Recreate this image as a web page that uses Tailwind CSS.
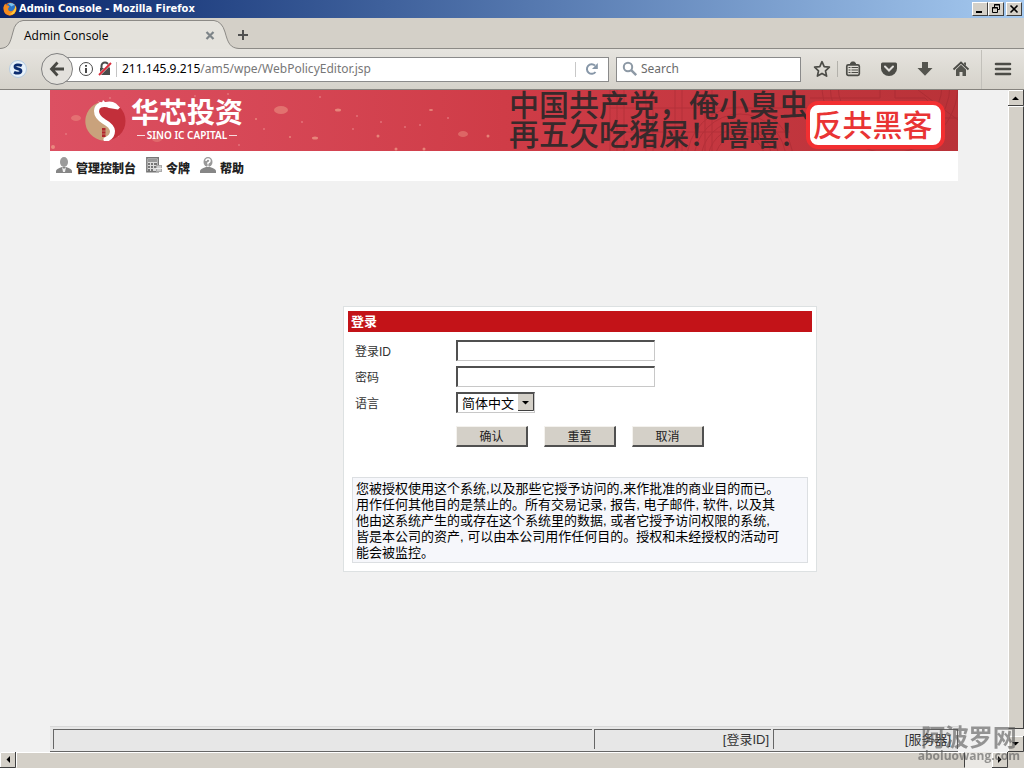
<!DOCTYPE html>
<html lang="zh-CN">
<head>
<meta charset="utf-8">
<title>Admin Console</title>
<script src="https://cdn.jsdelivr.net/npm/@tailwindcss/browser@4"></script>
</head>
<body class="h-screen flex flex-col overflow-hidden bg-[#d4d0c8] text-black font-['Noto_Sans','Noto_Sans_CJK_SC',sans-serif] text-xs">

<!-- Window title bar -->
<header class="h-[18px] shrink-0 flex items-center gap-[2px] pl-[3px] pr-[2px] bg-linear-to-r from-[#0a246a] to-[#a6caf0]">
  <svg class="size-[14px]" viewBox="0 0 14 14" aria-hidden="true">
    <circle cx="7" cy="7" r="6.5" fill="#e66000"/>
    <circle cx="7.6" cy="6" r="4.8" fill="#2b74c7"/>
    <path d="M5 1.5Q9 0 12 3Q9.500 3 8.500 4.500Z" fill="#7cc5f0"/>
    <path d="M.6 5Q1 2.500 2.500 1.500L3 3.200Q5 3 6.500 4.500L5.400 6Q4.500 8 6.500 9Q9 10 12 6.500Q13 9 11 11.500Q7 15 2.800 12Q.2 9.500 .6 5Z" fill="#f58a1f"/>
    <path d="M12.500 3.500Q14.500 8 11 11.700Q8 13 6 12.300Q11 11 12.500 3.500Z" fill="#fcc93a"/>
  </svg>
  <h1 class="flex-1 text-[11px] leading-4 font-bold text-white font-['DejaVu_Sans_Condensed','Noto_Sans',sans-serif]">Admin Console - Mozilla Firefox</h1>
  <div class="flex">
    <button aria-label="Minimize" class="w-4 h-[14px] bg-[#d4d0c8] border border-t-white border-l-white border-r-[#404040] border-b-[#404040]"><svg class="w-[14px] h-3" viewBox="0 0 14 12"><path d="M3 8h6v2H3z"/></svg></button>
    <button aria-label="Restore" class="w-4 h-[14px] bg-[#d4d0c8] border border-t-white border-l-white border-r-[#404040] border-b-[#404040]"><svg class="w-[14px] h-3" viewBox="0 0 14 12" fill="none" stroke="#000"><path d="M5.500 4V1.500h5v5H9M5 2h6M3.500 4.500h5v5h-5zM3 5h6"/></svg></button>
    <button aria-label="Close" class="ml-[2px] w-4 h-[14px] bg-[#d4d0c8] border border-t-white border-l-white border-r-[#404040] border-b-[#404040]"><svg class="w-[14px] h-3" viewBox="0 0 14 12" fill="none" stroke="#000" stroke-width="1.600"><path d="M3.500 2.500l7 7M10.500 2.500l-7 7"/></svg></button>
  </div>
</header>

<!-- Tab strip -->
<div class="h-[31px] shrink-0 flex items-center relative bg-[#d4d0c8]">
  <svg class="absolute inset-0 w-full h-[31px]" aria-hidden="true">
    <path d="M0 30.500H2000" stroke="#8c8a86" fill="none"/>
    <path d="M0 30.500C9 30 10 25 13 14Q15 3.500 23 2.500H214Q222 3.500 225 14C228 25 230 30 239 30.500V31H0Z" fill="#e4e2dc"/>
    <path d="M0 30.500C9 30 10 25 13 14Q15 3.500 23 2.500H214Q222 3.500 225 14C228 25 230 30 239 30.500" stroke="#8c8a86" fill="none"/>
  </svg>
  <div class="relative w-[225px] pl-6 pr-2 pt-1 flex items-center justify-between">
    <span class="text-xs leading-4 font-['Open_Sans',sans-serif]">Admin Console</span>
    <button aria-label="Close tab"><svg class="size-4" viewBox="0 0 16 16" stroke="#7d8488" stroke-width="2.200"><path d="M5.500 4l7 7M12.500 4l-7 7"/></svg></button>
  </div>
  <button aria-label="New tab" class="relative ml-[10px] pt-[3px]"><svg class="size-4" viewBox="0 0 16 16" stroke="#505050" stroke-width="2"><path d="M8 3v10M3 8h10"/></svg></button>
</div>

<!-- Navigation toolbar -->
<nav class="h-[41px] shrink-0 flex items-center pl-[9px] pr-3 bg-linear-to-b from-[#e6e4df] to-[#d5d2ca] border-b border-[#85837e]">
  <button aria-label="S" class="size-[18px] shrink-0"><svg class="size-[18px]" viewBox="0 0 18 18"><circle cx="9" cy="9" r="8.500" fill="#e8f2fa" stroke="#b5cbe0"/><path d="M12.800 5.800Q10.500 4.500 8 4.900Q5.800 5.300 6 7Q6.200 8.300 9 8.900Q12 9.500 12 11.200Q11.800 13 9.200 13.200Q7 13.300 5 12.200" fill="none" stroke="#0c2d70" stroke-width="2.800"/></svg></button>
  <button aria-label="Back" class="relative z-10 ml-[14px] size-8 shrink-0 rounded-full bg-[#e3e1dc] border border-[#808080] flex items-center justify-center"><svg class="size-5" viewBox="0 0 20 20" fill="none" stroke="#494944" stroke-width="2.800"><path d="M10.500 3.500L4.500 10l6 6.500M4.500 10H17"/></svg></button>
  <div class="-ml-[9px] flex-1 min-w-0 h-[25px] flex items-center bg-white border border-[#8a8a8a] pl-[13px]">
    <svg class="size-4 shrink-0" viewBox="0 0 16 16" fill="none" stroke="#494949"><circle cx="8" cy="8" r="6.500"/><path d="M8 7v5M8 4v1.800" stroke-width="2"/></svg>
    <svg class="size-4 shrink-0 ml-[3px]" viewBox="0 0 16 16"><path d="M4.500 8V5a3.500 3.500 0 017 0v3" fill="none" stroke="#4a4a4a" stroke-width="2"/><path d="M3 7h10v7H3z" fill="#4a4a4a"/><path d="M2 14L14 2" stroke="#fff" stroke-width="2.600"/><path d="M2 14L14 2" stroke="#d92b3a" stroke-width="2"/></svg>
    <span class="ml-[3px] mr-[5px] w-px h-[15px] bg-[#c4c4c4]"></span>
    <label for="url" class="text-xs leading-4">211.145.9.215</label>
    <input id="url" value="/am5/wpe/WebPolicyEditor.jsp" class="flex-1 min-w-0 text-xs leading-4 text-[#777] bg-transparent outline-none">
    <span class="w-px h-[15px] bg-[#c8c8c8]"></span>
    <button aria-label="Reload" class="w-8 flex justify-center"><svg class="size-4" viewBox="0 0 16 16"><path d="M11.500 11A4.800 4.800 0 1111 4.500" fill="none" stroke="#8797a8" stroke-width="2"/><path d="M13.800 2v6H8z" fill="#8797a8"/></svg></button>
  </div>
  <div class="ml-[7px] w-[185px] h-[25px] flex items-center bg-white border border-[#8a8a8a] pl-[5px] gap-[3px]">
    <svg class="size-4 shrink-0" viewBox="0 0 16 16" fill="none" stroke="#8d99a5" stroke-width="2"><circle cx="6" cy="6" r="4.200"/><path d="M9.200 9.200l5 5" stroke-width="2.500"/></svg>
    <input aria-label="Search" placeholder="Search" class="flex-1 min-w-0 text-xs leading-4 placeholder:text-[#6b6b6b] outline-none">
  </div>
  <button aria-label="Bookmark" class="ml-[12px]"><svg class="size-[18px]" viewBox="0 0 18 18" fill="none" stroke="#4c4c47" stroke-width="1.700" stroke-linejoin="round"><path d="M9 1.700l2.200 4.900 5.200.6-3.900 3.600 1.100 5.300L9 13.400l-4.600 2.700 1.100-5.300-3.900-3.600 5.200-.6z"/></svg></button>
  <span class="ml-[6px] w-px h-4 bg-[#b3b1ab]"></span>
  <button aria-label="Bookmarks list" class="ml-[6px]"><svg class="size-[18px]" viewBox="0 0 18 18" fill="none" stroke="#4c4c47"><rect x="2.800" y="4.800" width="12.500" height="10.500" rx="1.500" stroke-width="1.700"/><path d="M6 4.500L7.500 2h3L12 4.500z" fill="#4c4c47"/><path d="M4.500 7.500h2M4.500 10h2M4.500 12.500h2M7.500 7.500H14M7.500 10H14M7.500 12.500H14"/></svg></button>
  <button aria-label="Pocket" class="ml-[18px]"><svg class="size-[18px]" viewBox="0 0 18 18"><path d="M2.500 2.500h13q1.500 0 1.500 1.500v4.500a8 7.500 0 01-16 0V4q0-1.500 1.500-1.500z" fill="#4c4c47"/><path d="M5 6.500l4 4 4-4" fill="none" stroke="#e0deda" stroke-width="2" stroke-linecap="round"/></svg></button>
  <button aria-label="Downloads" class="ml-[18px]"><svg class="size-[18px]" viewBox="0 0 18 18"><path d="M6 2h6v6h4.500L9 15.800 1.500 8H6z" fill="#55554f"/></svg></button>
  <button aria-label="Home" class="ml-[18px]"><svg class="size-[18px]" viewBox="0 0 18 18" fill="#55554f"><path d="M1.500 9.500L9 2.500l7.500 7" fill="none" stroke="#4c4c47" stroke-width="1.800"/><path d="M4 9.500l5-4.700 5 4.700V16h-3.500v-4h-3v4H4zM12 2.500h2V6l-2-2z"/></svg></button>
  <span class="ml-[11px] w-px h-[39px] bg-[#c2c0ba]"></span>
  <button aria-label="Menu" class="ml-[12px]"><svg class="size-[18px]" viewBox="0 0 18 18" stroke="#4c4c47" stroke-width="2.600" stroke-linecap="round"><path d="M2 4h14M2 9h14M2 14h14"/></svg></button>
</nav>

<div class="flex-1 min-h-0 flex">
  <!-- Page -->
  <main class="flex-1 min-w-0 flex flex-col bg-[#f1f1f1] px-[50px] font-['Liberation_Sans','Noto_Sans_CJK_SC',sans-serif]">
    <div class="relative h-[61px] shrink-0 bg-linear-to-r from-[#dc5062] via-[#cf3c47] via-50% to-[#b93238] flex items-start">
      <svg class="absolute inset-0 w-full h-full" aria-hidden="true">
        <g fill="#f0a08c" opacity=".7">
          <ellipse cx="231" cy="20" rx="7" ry="4" opacity=".7"/><ellipse cx="26" cy="28" rx="5" ry="3" opacity=".6"/><ellipse cx="413" cy="44" rx="5" ry="3" opacity=".6"/><ellipse cx="107" cy="49" rx="5" ry="3" opacity=".5"/>
          <ellipse cx="288" cy="20" rx="3" ry="1.500"/><ellipse cx="381" cy="20" rx="2" ry="1"/><ellipse cx="265" cy="48" rx="3" ry="1.500"/><circle cx="3" cy="57" r="2"/><circle cx="328" cy="46" r="1.500"/><circle cx="438" cy="46" r="1.500"/><circle cx="206" cy="29" r="1"/><circle cx="240" cy="47" r="1"/><circle cx="346" cy="59" r="1.500"/><circle cx="374" cy="59" r="1.500"/>
        </g>
        <g fill="#ea8488" opacity=".7"><circle cx="60" cy="8" r="1"/><circle cx="145" cy="6" r="1"/><circle cx="178" cy="4" r="1"/><circle cx="214" cy="39" r="1"/><circle cx="252" cy="32" r="1"/><circle cx="270" cy="7" r="1"/><circle cx="307" cy="26" r="1"/><circle cx="331" cy="32" r="1"/><circle cx="355" cy="37" r="1"/><circle cx="370" cy="35" r="1"/><circle cx="303" cy="39" r="1"/><circle cx="398" cy="28" r="1"/><circle cx="16" cy="44" r="1"/><circle cx="68" cy="46" r="1"/><circle cx="189" cy="55" r="1"/></g>
        <g fill="none" stroke="#8c2028" opacity=".3">
          <path d="M560 0v61M567 0v61M574 0v61M596 0v61M603 0v61M625 0v61M632 0v61M655 0v61M662 0v61M560 18h200M560 42h180"/>
          <circle cx="690" cy="70" r="25"/><circle cx="690" cy="70" r="32"/><circle cx="690" cy="70" r="39"/><circle cx="690" cy="70" r="46"/><circle cx="690" cy="70" r="53"/>
          <circle cx="840" cy="-5" r="52"/><circle cx="840" cy="-5" r="60"/><circle cx="840" cy="-5" r="68"/><path d="M760 8h70v-8M845 0v8h30l20 20h20M868 0l40 30"/>
        </g>
      </svg>
      <div class="relative flex items-start gap-1 pl-[35px] pt-[9px]">
        <svg class="size-[42px]" viewBox="0 0 42 42" aria-hidden="true">
          <circle cx="21" cy="22" r="19.500" fill="#c22f3a"/>
          <path d="M16 3A19.500 19.500 0 0022 41.500L27 32L12 17z" fill="#c9a27c"/>
          <path d="M26 6.500Q12 3 11.500 12Q11.500 18 19 22.500Q27 27 27.500 32Q27.500 38 21 40.500" fill="none" stroke="#fff" stroke-width="5" stroke-linecap="round"/>
          <path d="M12.500 2.500L17 3.500L18 1L20 3Q27 1.500 31 4.500L35 8.500L33 10.500L24 9z" fill="#fff"/>
          <path d="M17 29h3.500v9H17z" fill="#b1252d"/><path d="M16.500 32h4.500M16.500 35h4.500" stroke="#c9a27c" stroke-width=".7"/>
        </svg>
        <div class="flex flex-col items-center text-white">
          <span class="text-[28px] leading-[29px] font-bold">华芯投资</span>
          <span class="text-[10px] leading-[14px] font-semibold font-['Noto_Sans',sans-serif] flex items-center gap-[2px]"><i class="w-2 h-px bg-white/80"></i>SINO IC CAPITAL<i class="w-2 h-px bg-white/80"></i></span>
        </div>
      </div>
      <div class="relative ml-auto pr-[13px] flex items-start">
        <p class="pt-px w-[300px] text-[30px] leading-[29px] font-medium text-[#38292b] whitespace-nowrap">中国共产党，俺小臭虫<br>再五欠吃猪屎！嘻嘻！</p>
        <p class="-ml-[3px] mt-[11px] h-[48px] pr-[6px] rounded-[12px] border-4 border-[#f22f31] bg-white text-[30px] leading-[42px] font-medium text-[#e93434] whitespace-nowrap w-[139px] text-center">反共黑客</p>
      </div>
    </div>

    <nav class="h-[30px] shrink-0 bg-white flex items-start pl-[6px] pt-[6px] gap-[10px] text-xs leading-4 font-black text-[#222]">
      <a href="#console" class="flex items-start gap-1"><svg class="size-4" viewBox="0 0 16 16"><path d="M0 16v-2q0-2 6-4h4q6 2 6 4v2z" fill="#868686"/><ellipse cx="8" cy="5" rx="4" ry="5" fill="#9b9b9b"/><path d="M6 10l2 2 2-2-1 5H7z" fill="#eee"/></svg><span class="pt-1">管理控制台</span></a>
      <a href="#token" class="flex items-start gap-1"><svg class="size-4" viewBox="0 0 16 16"><path d="M.8.8h11.500v14H.8z" fill="#ddd" stroke="#777" stroke-width="1.400"/><path d="M2 2h9v3H2z" fill="#999"/><path d="M2 6h2v2H2zm3 0h2v2H5zm3 0h3v2H8zM2 9h2v2H2zm3 0h2v2H5zm3 0h3v2H8zm-6 3h2v2H2zm3 0h2v2H5z" fill="#777"/><path d="M10 8h6v7h-6z" fill="#aaa"/><path d="M12 9v5M14 9v5M10 11.500h6" stroke="#eee"/></svg><span class="pt-1">令牌</span></a>
      <a href="#help" class="flex items-start gap-1"><svg class="size-4" viewBox="0 0 16 16"><path d="M0 16v-2q0-2 6-4h4q6 2 6 4v2z" fill="#868686"/><ellipse cx="8" cy="5" rx="4.500" ry="5" fill="#999"/><path d="M6 4q0-2 2-2t2 2q0 1-2 2v1.500" fill="none" stroke="#fff" stroke-width="1.500"/><path d="M7.200 8.500h1.500V10H7.200z" fill="#fff"/></svg><span class="pt-1">帮助</span></a>
    </nav>

    <form class="ml-[293px] mr-[141px] mt-[125px] border border-[#dde1e2] bg-white p-1 text-xs leading-4">
      <h2 class="h-[21px] bg-[#c31318] text-white font-bold text-[13px] leading-[21px] pl-[3px]">登录</h2>
      <div class="pt-2 px-1 grid grid-cols-[104px_1fr] gap-y-[5px] items-center text-[#333]">
        <label for="uid" class="pl-[3px] pt-[2px]">登录ID</label>
        <input id="uid" type="text" class="w-[199px] h-[21px] px-1 bg-white text-black border-t-2 border-l-2 border-r border-b border-t-[#505050] border-l-[#505050] border-r-[#c8c8c8] border-b-[#c8c8c8] outline-none">
        <label for="pwd" class="pl-[3px] pt-[2px]">密码</label>
        <input id="pwd" type="password" class="w-[199px] h-[21px] px-1 bg-white text-black border-t-2 border-l-2 border-r border-b border-t-[#505050] border-l-[#505050] border-r-[#c8c8c8] border-b-[#c8c8c8] outline-none">
        <label for="lang" class="pl-[3px] pt-[2px]">语言</label>
        <div class="relative w-[79px]">
          <select id="lang" class="block appearance-none w-full h-[21px] pl-1 pt-px bg-white text-black text-[13px] leading-4 border-t-2 border-l-2 border-r border-b border-t-[#505050] border-l-[#505050] border-r-[#c8c8c8] border-b-[#c8c8c8]"><option>简体中文</option></select>
          <svg class="absolute right-px top-[2px] w-4 h-[17px] pointer-events-none" viewBox="0 0 16 17"><path d="M0 0h16v17H0z" fill="#d4d0c8"/><path d="M15.500 0v16.500H0" fill="none" stroke="#404040"/><path d="M4 7h7L7.500 10.500z"/></svg>
        </div>
      </div>
      <div class="pl-[108px] pt-[13px] flex gap-4 text-[#222]">
        <button type="submit" class="w-[72px] h-[21px] pt-px bg-[#d4d0c8] border-t border-l border-r-2 border-b-2 border-t-[#f4f2ee] border-l-[#f4f2ee] border-r-[#505050] border-b-[#505050]">确认</button>
        <button type="reset" class="w-[72px] h-[21px] pt-px bg-[#d4d0c8] border-t border-l border-r-2 border-b-2 border-t-[#f4f2ee] border-l-[#f4f2ee] border-r-[#505050] border-b-[#505050]">重置</button>
        <button type="button" class="w-[72px] h-[21px] pt-px bg-[#d4d0c8] border-t border-l border-r-2 border-b-2 border-t-[#f4f2ee] border-l-[#f4f2ee] border-r-[#505050] border-b-[#505050]">取消</button>
      </div>
      <p class="mt-[30px] mx-1 mb-1 pt-[3px] pb-[1px] pl-[3px] border border-[#dcdfe2] bg-[#f6f7fb] text-[13px] leading-4 whitespace-nowrap">您被授权使用这个系统,以及那些它授予访问的,来作批准的商业目的而已。<br>用作任何其他目的是禁止的。所有交易记录, 报告, 电子邮件, 软件, 以及其<br>他由这系统产生的或存在这个系统里的数据, 或者它授予访问权限的系统,<br>皆是本公司的资产, 可以由本公司用作任何目的。授权和未经授权的活动可<br>能会被监控。</p>
    </form>

    <footer class="mt-auto h-[26px] shrink-0 flex gap-[2px] pt-[2px] pb-[2px] pl-[3px] bg-[#e7e7e7] border-t border-t-[#d8d8d8] border-b border-b-[#666] text-[13px] leading-5 text-[#333]">
      <div class="flex-1 border-t border-l border-[#666]"></div>
      <div class="w-[177px] pr-[2px] border-t border-l border-[#666] text-right">[登录ID]</div>
      <div class="w-[185px] pr-[6px] border-t border-l border-r border-[#666] text-right">[服务器]</div>
    </footer>
  </main>

  <!-- Vertical scroll bar -->
  <div class="w-4 shrink-0 flex flex-col bg-[#eae8e4]">
    <svg class="w-4 h-4" viewBox="0 0 16 16"><path d="M0 0h16v16H0z" fill="#d4d0c8"/><path d="M.5 15V.5H15" fill="none" stroke="#fff"/><path d="M15.500 0v15.500H0" fill="none" stroke="#404040"/><path d="M4 10h7L7.500 6.500z"/></svg>
    <div class="flex-1 bg-[#d4d0c8] border border-t-white border-l-white border-r-[#404040] border-b-[#404040]"></div>
    <div class="h-[7px]"></div>
    <svg class="w-4 h-4" viewBox="0 0 16 16"><path d="M0 0h16v16H0z" fill="#d4d0c8"/><path d="M.5 15V.5H15" fill="none" stroke="#fff"/><path d="M15.500 0v15.500H0" fill="none" stroke="#404040"/><path d="M4 6h7L7.500 9.500z"/></svg>
  </div>
</div>

<!-- Horizontal scroll bar -->
<div class="h-4 shrink-0 flex pr-4 bg-[#d4d0c8]">
  <svg class="w-4 h-4" viewBox="0 0 16 16"><path d="M.5 15V.5H15" fill="none" stroke="#fff"/><path d="M15.500 0v15.500H0" fill="none" stroke="#404040"/><path d="M10 4v7L6.500 7.500z"/></svg>
  <div class="flex-1 border border-t-white border-l-white border-r-[#404040] border-b-[#d4d0c8]"></div>
  <div class="w-[27px] bg-[#eae8e4]"></div>
  <svg class="w-4 h-4" viewBox="0 0 16 16"><path d="M.5 15V.5H15" fill="none" stroke="#fff"/><path d="M15.500 0v15.500H0" fill="none" stroke="#404040"/><path d="M6 4v7L9.500 7.500z"/></svg>
</div>

<!-- Watermark laid over the window corner -->
<div class="fixed right-1 bottom-[5px] flex flex-col items-center text-[#555]/60 pointer-events-none font-bold whitespace-nowrap">
  <span class="text-[24px] leading-[25px] font-['Noto_Sans_CJK_SC',sans-serif]">阿波罗网</span>
  <span class="text-xs leading-[15px] font-['Open_Sans',sans-serif]">aboluowang.com</span>
</div>
</body>
</html>
